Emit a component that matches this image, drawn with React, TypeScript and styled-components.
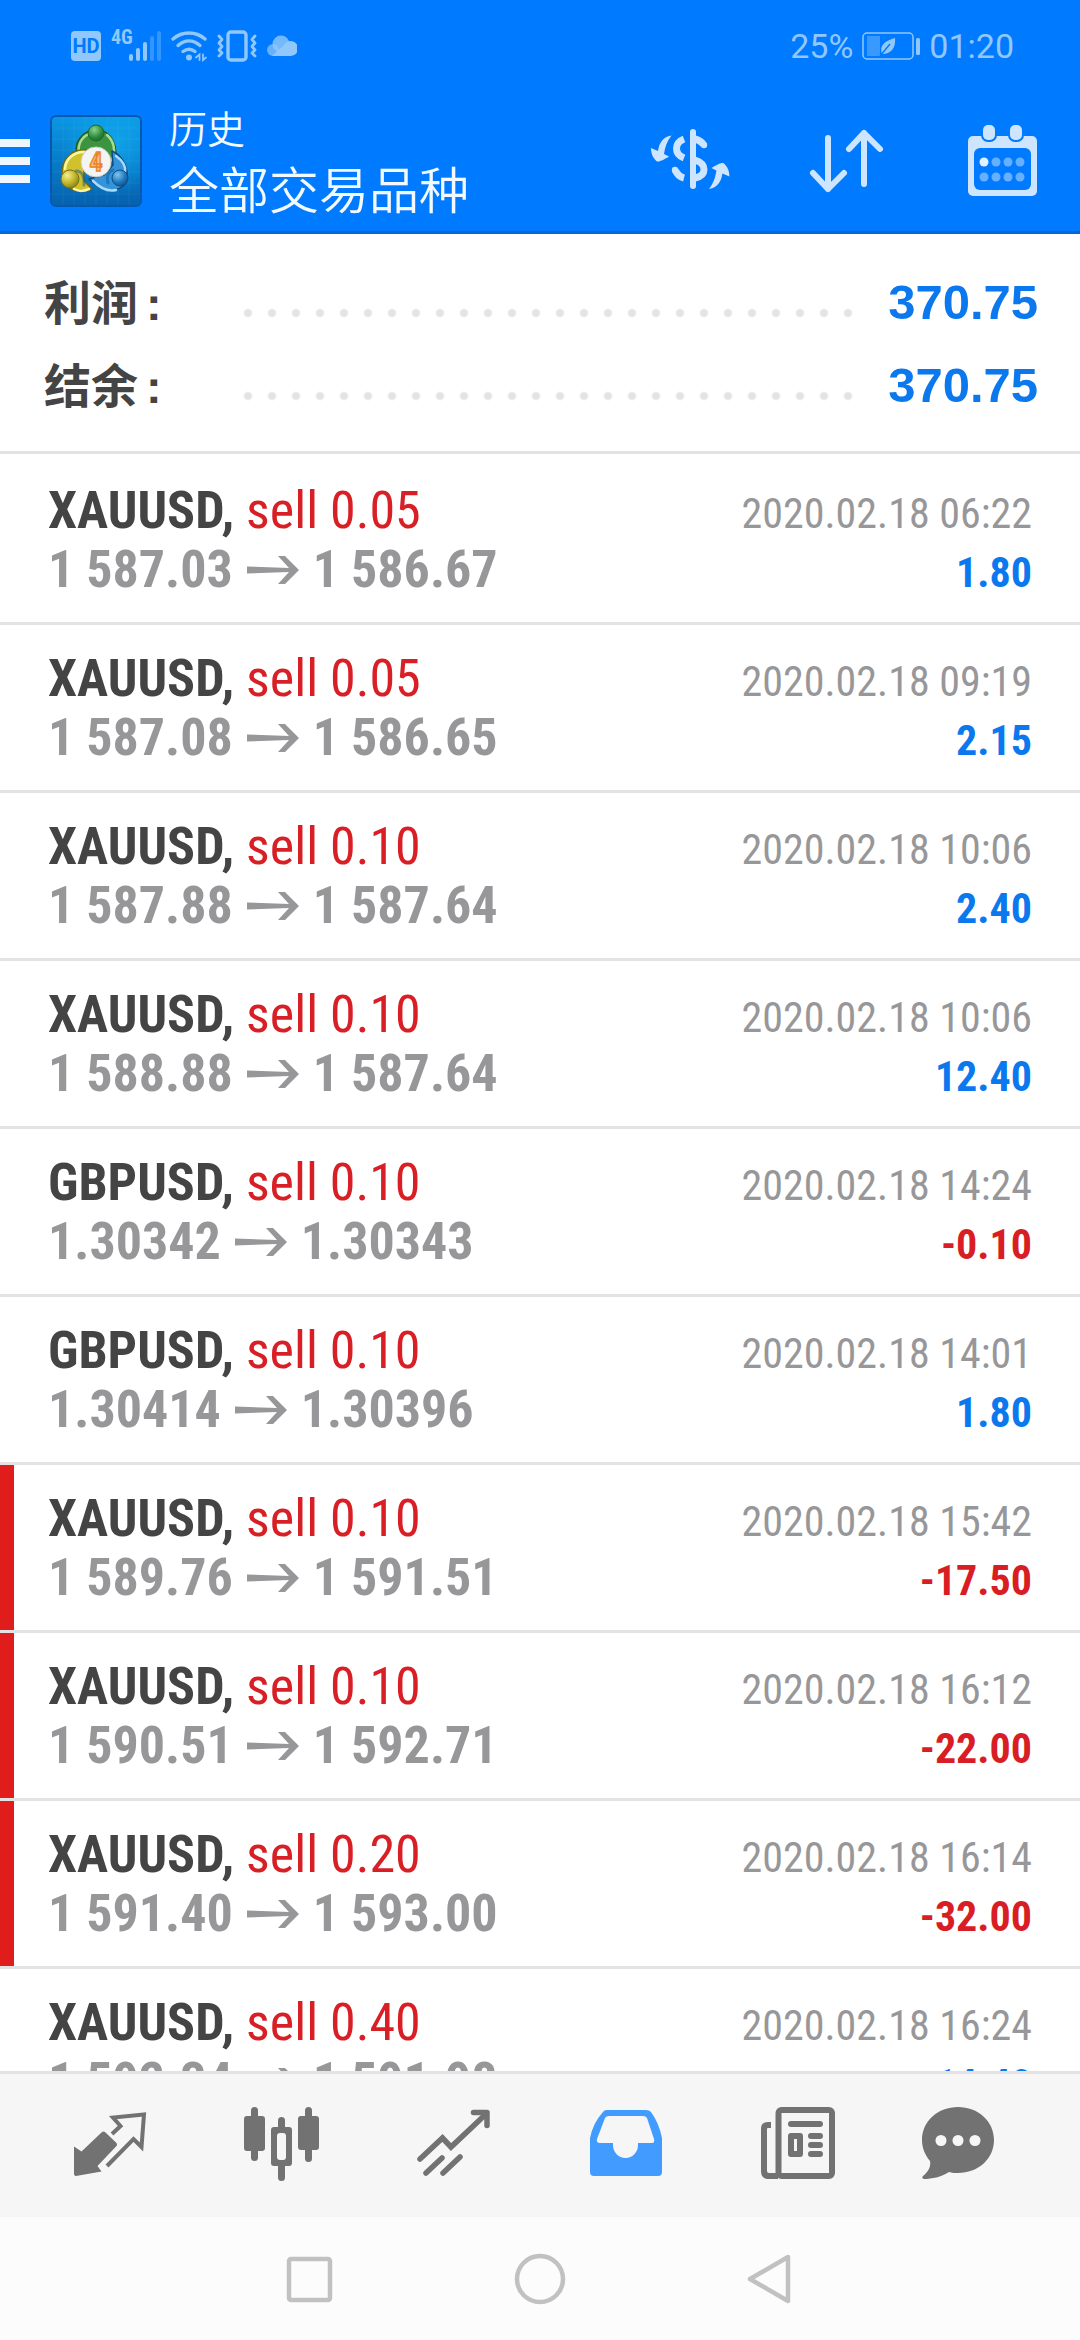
import React from "react";
import styled, { createGlobalStyle, css } from "styled-components";

const color = {
  blue: "#007aff",
  headerEdge: "#0068da",
  headerIcon: "#cde5ff",
  status: "#91c8fc",
  line: "#e3e3e3",
  ink: "#444444",
  grey: "#97979a",
  sell: "#d81f26",
  loss: "#d81e24",
  profit: "#0b78ee",
  marker: "#e11c1c",
  tab: "#727272",
  tabActive: "#429bff",
  system: "#c1c1c1",
};

const condensed = `"Roboto Condensed", Roboto, sans-serif`;
const chinese = `Roboto, "Noto Sans CJK SC", sans-serif`;

const GlobalStyle = createGlobalStyle`
  *, *::before, *::after { box-sizing: border-box; }
  body { margin: 0; background: #fff; }
  button { border: 0; padding: 0; background: none; font: inherit; color: inherit; cursor: pointer; }
  h1, h2, p, ul, dl, dt, dd { margin: 0; padding: 0; font-weight: inherit; }
  svg { display: block; flex: none; }
`;

const Screen = styled.div`
  display: flex;
  flex-direction: column;
  height: 100vh;
  background: #fff;
  font-family: ${chinese};
`;

/* ---------- header ---------- */

const Header = styled.header`
  flex: none;
  background: ${color.blue};
  border-bottom: 3px solid ${color.headerEdge};
`;

const StatusBar = styled.div`
  display: flex;
  align-items: center;
  justify-content: space-between;
  height: 91px;
  padding: 0 66px 0 71px;
  color: ${color.status};
  font: 400 34px/40px Roboto, sans-serif;
`;

const StatusGroup = styled.div<{ $gap: number }>`
  display: flex;
  align-items: center;
  gap: ${(p) => p.$gap}px;
`;

const HdBadge = styled.span`
  width: 30px;
  border-radius: 4px;
  background: ${color.status};
  color: ${color.blue};
  font: 700 20px/30px Roboto, sans-serif;
  text-align: center;
`;

const AppBar = styled.div`
  display: flex;
  align-items: center;
  height: 140px;
  padding-right: 38px;
`;

const MenuButton = styled.button`
  display: grid;
  gap: 10px;
  width: 30px;
  margin-right: 20px;
`;

const MenuLine = styled.span`
  height: 8px;
  background: #eef7ff;
`;

const Titles = styled.div`
  flex: 1;
  margin-left: 27px;
  color: #f2f9ff;
  font-family: "Noto Sans CJK SC", sans-serif;
  font-weight: 350;
`;

const Title = styled.h1`
  font-size: 38px;
  line-height: 52px;
`;

const Subtitle = styled.p`
  font-size: 50px;
  line-height: 68px;
`;

const Actions = styled.div`
  display: flex;
  gap: 76px;
  color: ${color.headerIcon};
`;

/* ---------- summary ---------- */

const Summary = styled.dl`
  flex: none;
  padding: 26px 42px 25px 44px;
  border-bottom: 3px solid ${color.line};
`;

const SummaryRow = styled.div`
  display: flex;
  align-items: center;
  height: 83px;
`;

const SummaryLabel = styled.dt`
  width: 192px;
  color: ${color.ink};
  font: 700 47px/60px "Noto Sans CJK SC", sans-serif;
`;

const Colon = styled.span`
  padding-left: 8px;
  font-family: "Liberation Sans", sans-serif;
`;

const Leader = styled.span`
  flex: 1;
  height: 24px;
  margin: 22px 28px 0 0;
  background: radial-gradient(circle, #e3e3e3 0 3px, transparent 5px) left center / 24px 24px round;
`;

const SummaryValue = styled.dd`
  color: ${color.profit};
  font: 700 49px/60px "Liberation Sans", Arial, sans-serif;
`;

/* ---------- deals ---------- */

const DealList = styled.ul`
  flex: 1;
  min-height: 0;
  padding-top: 3px;
  overflow-y: auto;
  scrollbar-width: none;
  list-style: none;
`;

const Deal = styled.li<{ $marked: boolean }>`
  padding: 24px 48px 23px;
  border-bottom: 3px solid ${color.line};
  ${(p) =>
    p.$marked &&
    css`
      box-shadow: inset 14px 0 ${color.marker};
    `}
`;

const DealLine = styled.div`
  display: flex;
  align-items: baseline;
  justify-content: space-between;
  height: 59px;
  font: 400 52px/59px ${condensed};
`;

const Symbol = styled.strong`
  color: ${color.ink};
`;

const Side = styled.span`
  color: ${color.sell};
`;

const DealDate = styled.time`
  color: ${color.grey};
  font-size: 42px;
`;

const Prices = styled.span`
  display: flex;
  align-items: center;
  gap: 14px;
  color: ${color.grey};
  font-weight: 700;
`;

const Profit = styled.strong<{ $loss: boolean }>`
  color: ${(p) => (p.$loss ? color.loss : color.profit)};
  font-size: 42px;
`;

/* ---------- bottom bars ---------- */

const TabBar = styled.nav`
  flex: none;
  display: grid;
  grid-template-columns: repeat(6, 1fr);
  justify-items: center;
  height: 146px;
  padding: 29px 24px 0;
  border-top: 3px solid ${color.line};
  background: #f6f6f6;
`;

const TabButton = styled.button<{ $active?: boolean }>`
  height: 80px;
  color: ${(p) => (p.$active ? color.tabActive : color.tab)};
`;

const SystemBar = styled.nav`
  flex: none;
  display: flex;
  align-items: center;
  justify-content: center;
  gap: 170px;
  height: 123px;
  background: #fcfcfc;
`;

/* ---------- icons ---------- */

const SignalIcon = () => (
  <svg width="50" height="44" viewBox="0 -6 50 44" fill="currentColor">
    <text x="0" y="14" fontFamily={condensed} fontSize="20" fontWeight="700">4G</text>
    <rect x="18" y="24" width="4" height="7" rx="2" />
    <rect x="25" y="18" width="4" height="13" rx="2" />
    <rect x="32" y="12" width="4" height="19" rx="2" />
    <rect x="39" y="6" width="4" height="25" rx="2" opacity=".35" />
    <rect x="46" y="1" width="4" height="30" rx="2" opacity=".35" />
  </svg>
);

const WifiIcon = () => (
  <svg width="36" height="32" viewBox="0 0 36 32" fill="none" stroke="currentColor" strokeWidth="3.4" strokeLinecap="round">
    <path d="M2 9C11 1 25 1 34 9" />
    <path d="M7 15.500C14 9.500 22 9.500 29 15.500" />
    <path d="M12 21.500C16 18.500 20 18.500 24 21.500" />
    <circle cx="18" cy="27.500" r="3" fill="currentColor" stroke="none" />
    <path d="M25 27.500L28.500 24.500V30M32 24.500V30L35 27.500" strokeWidth="1.800" />
  </svg>
);

const VibrateIcon = () => (
  <svg width="40" height="32" viewBox="0 0 40 32" fill="none" stroke="currentColor" strokeWidth="3.400" strokeLinecap="round" strokeLinejoin="round">
    <rect x="11" y="2" width="18" height="28" rx="3" />
    <path d="M2 6L5 9.500L2 13L5 16.500L2 20L5 23L2 26M38 6L35 9.500L38 13L35 16.500L38 20L35 23L38 26" strokeWidth="2.800" />
  </svg>
);

const CloudIcon = () => (
  <svg width="30" height="22" viewBox="0 0 30 22" fill="currentColor">
    <circle cx="6" cy="15" r="6" opacity=".7" />
    <circle cx="14" cy="9" r="8.500" opacity=".8" />
    <path d="M5 21L17 10A7.500 7.500 0 1 1 23 21Z" />
  </svg>
);

const BatteryIcon = () => (
  <svg width="58" height="28" viewBox="0 0 58 28" fill="currentColor">
    <rect x="1" y="1" width="50" height="26" rx="4" fill="none" stroke="currentColor" strokeWidth="1.500" />
    <rect x="5" y="4" width="13" height="20" opacity=".4" />
    <path d="M33 6C34 16 29 22 20 22C17 14 22 9 33 6Z" />
    <path d="M18 24L28 12" stroke={color.blue} strokeWidth="1.400" />
    <rect x="54" y="6" width="4" height="17" rx="1.500" />
  </svg>
);

const AppLogo = () => (
  <svg width="92" height="92" viewBox="0 0 92 92">
    <defs>
      <linearGradient id="tile" x1="0" y1="0" x2="0" y2="1">
        <stop offset="0" stopColor="#0a97e4" />
        <stop offset="1" stopColor="#0561ae" />
      </linearGradient>
      <radialGradient id="glow" cx=".7" cy=".3" r=".6">
        <stop offset="0" stopColor="#12aef2" stopOpacity=".7" />
        <stop offset="1" stopColor="#12aef2" stopOpacity="0" />
      </radialGradient>
      <radialGradient id="green" cx=".4" cy=".3" r=".8">
        <stop offset="0" stopColor="#8fd28a" />
        <stop offset=".6" stopColor="#2c8a3c" />
        <stop offset="1" stopColor="#1c6427" />
      </radialGradient>
      <radialGradient id="yellow" cx=".35" cy=".3" r=".8">
        <stop offset="0" stopColor="#f6ef8a" />
        <stop offset=".6" stopColor="#bcae22" />
        <stop offset="1" stopColor="#7d7718" />
      </radialGradient>
      <radialGradient id="azure" cx=".35" cy=".3" r=".8">
        <stop offset="0" stopColor="#7cc6f2" />
        <stop offset=".6" stopColor="#1f78bb" />
        <stop offset="1" stopColor="#0d4f88" />
      </radialGradient>
    </defs>
    <rect x="1" y="1" width="90" height="90" rx="5" fill="url(#tile)" stroke="#0759ae" strokeWidth="2" />
    <rect x="2" y="2" width="88" height="88" rx="4" fill="url(#glow)" />
    <path d="M13 2V90M24 2V90M35 2V90M46 2V90M57 2V90M68 2V90M79 2V90M2 13H90M2 24H90M2 35H90M2 46H90M2 57H90M2 68H90M2 79H90" stroke="#fff" strokeWidth=".5" opacity=".1" />
    <g strokeLinecap="round" strokeLinejoin="round">
      <path d="M28 44C22 28 32 15 47 15C61 15 70 32 64 50L52 40L38 36Z" fill="#3c9440" stroke="#1f5f23" strokeWidth="1.500" />
      <path d="M29 38C27 27 35 19 41 19M57 20C64 26 66 36 62 45" fill="none" stroke="#a9dc8e" strokeWidth="2.500" />
      <path d="M38 35C22 33 11 44 12 60C14 74 28 80 42 74L34 66L34 50Z" fill="#d2c12b" stroke="#6f6a12" strokeWidth="1.500" />
      <path d="M34 37C22 37 15 46 15 54M24 74C30 77 34 76 39 74" fill="none" stroke="#fbf6a2" strokeWidth="2.500" />
      <path d="M62 36C73 41 80 54 76 68C66 80 50 76 39 64L54 60L63 50Z" fill="#3493da" stroke="#0b4c86" strokeWidth="1.500" />
      <path d="M66 41C73 46 76 52 75 57M66 75C58 77 50 73 43 66" fill="none" stroke="#a8dcfa" strokeWidth="2.500" />
      <path d="M26 56C32 56 35 62 34 70M63 55C58 56 56 62 58 68" fill="none" stroke="#0c5c9a" strokeWidth="3" opacity=".5" />
    </g>
    <circle cx="46" cy="18" r="8" fill="url(#green)" stroke="#1f6a2b" />
    <circle cx="20" cy="64" r="9" fill="url(#yellow)" stroke="#77711a" />
    <circle cx="70" cy="63" r="8" fill="url(#azure)" stroke="#0d4f88" />
    <circle cx="46" cy="47" r="15" fill="#f4f4f2" stroke="#c9cdc4" />
    <text x="46" y="56" textAnchor="middle" fontFamily={condensed} fontSize="26" fontWeight="700" fill="#f8c48c" stroke="#e98428" strokeWidth="1.400">4</text>
  </svg>
);

const swapArrow =
  "M21.500 8.500C12 10 9 17 8 24L1 21C1 28 4 32 7 34.500C10 35 15 32 19 29.500L14 27C15 20 17 14 21.500 8.500Z";

const CurrencyIcon = () => (
  <svg width="80" height="72" viewBox="0 -2 80 72" fill="none" stroke="currentColor" strokeWidth="7">
    <path d="M43 5V59" strokeWidth="6" strokeLinecap="round" />
    <path d="M34 12C24 16 24 27 34 31" />
    <path d="M25.500 43.500C27 47 30 50 34 51" />
    <circle cx="25" cy="43" r="3.200" fill="currentColor" stroke="none" />
    <path d="M45 12C49 13 52 15 53.500 18" />
    <circle cx="54" cy="18" r="3.200" fill="currentColor" stroke="none" />
    <path d="M45 33C57 37 57 48 45 51" />
    <g fill="currentColor" stroke="none">
      <path d={swapArrow} />
      <path d={swapArrow} transform="rotate(180 40.200 35.300)" />
    </g>
  </svg>
);

const SortIcon = () => (
  <svg width="80" height="72" viewBox="0 0 80 72" fill="none" stroke="currentColor" strokeWidth="6" strokeLinecap="round" strokeLinejoin="round">
    <path d="M22 13V64M7 48L22 64L38 48" />
    <path d="M58 59V8M43 24L58 8L74 24" />
  </svg>
);

const CalendarIcon = () => (
  <svg width="80" height="72" viewBox="0 0 80 72" fill="currentColor">
    <rect x="6" y="11" width="69" height="60" rx="5" />
    <rect x="12" y="23" width="57" height="42" rx="6" fill={color.blue} />
    <rect x="19" y="-2" width="16" height="19" rx="7" fill={color.blue} />
    <rect x="46" y="-2" width="16" height="19" rx="7" fill={color.blue} />
    <rect x="21" y="0" width="12" height="15" rx="5" />
    <rect x="48" y="0" width="12" height="15" rx="5" />
    {[37, 52].map((y) =>
      [22, 34, 46, 58].map((x) => (
        <circle key={`${x}-${y}`} cx={x} cy={y} r="4.500" fill={x === 22 && y === 37 ? "#e2f1ff" : "#66b0ff"} />
      ))
    )}
  </svg>
);

const PriceArrow = () => (
  <svg width="52" height="28" viewBox="0 0 52 28" fill={color.grey} role="img" aria-label="to">
    <path d="M0 10.500L42 12L31 0H38L52 14L38 28H31L42 16L0 17.500Z" />
  </svg>
);

const QuotesIcon = () => (
  <svg width="80" height="80" viewBox="0 0 80 80">
    <path d="M4 43.500L11.500 48.500L31.500 29.500Q33.500 27.500 35.500 29.500L46 39.500Q48 41.500 46 43.500L27.500 63L31.500 68.500L6 73Q4 73 4 71Z" fill="currentColor" />
    <path d="M42 31L50.500 23L43 14.500L74 11.500L71.500 44L63.500 36L37 63" fill="none" stroke="currentColor" strokeWidth="4" />
  </svg>
);

const ChartIcon = () => (
  <svg width="80" height="80" viewBox="0 0 80 80" fill="currentColor">
    <rect x="9" y="4" width="7" height="54" rx="3.500" />
    <rect x="2" y="13" width="21" height="35" rx="3" />
    <rect x="63" y="4" width="7" height="55" rx="3.500" />
    <rect x="56" y="13" width="21" height="34" rx="3" />
    <rect x="36" y="14" width="7" height="64" rx="3.500" />
    <rect x="29" y="24" width="21" height="39" rx="3" />
    <rect x="35" y="30" width="9" height="27" rx="3" fill="#f6f6f6" />
  </svg>
);

const TradeIcon = () => (
  <svg width="80" height="80" viewBox="0 0 80 80" fill="none" stroke="currentColor" strokeWidth="5.500" strokeLinecap="round" strokeLinejoin="round">
    <path d="M6 56L28.500 35L37 44L72 11" strokeLinejoin="miter" />
    <path d="M59.500 9.500H73V22.500" />
    <path d="M12 70L28 55M29 70L46 54" />
  </svg>
);

const HistoryIcon = () => (
  <svg width="80" height="80" viewBox="0 0 80 80" fill="currentColor" fillRule="evenodd">
    <path d="M17 9Q18 7 21 7H60Q63 7 65 9Q73 20 76 35V69Q76 73 72 73H8Q4 73 4 69V35Q7 20 17 9ZM23 13Q20 13 19 15L11 36Q10 40 14 40H27V42A12.500 13 0 0 0 52 42V40H66Q69 40 68 36L61 15Q60 13 57 13Z" />
  </svg>
);

const NewsIcon = () => (
  <svg width="80" height="80" viewBox="0 0 80 80" fill="none" stroke="currentColor" strokeWidth="6">
    <rect x="20.500" y="7" width="53.500" height="66" rx="3" />
    <path d="M13 22H10Q6 22 6 26V68Q6 73 11 73H20" />
    <path d="M33 21H62" strokeLinecap="round" />
    <path d="M53 33H62M53 42H62M53 51H62" strokeLinecap="round" />
    <rect x="33" y="33" width="9" height="18" strokeLinejoin="round" />
  </svg>
);

const ChatIcon = () => (
  <svg width="104" height="80" viewBox="0 0 104 80" fill="currentColor">
    <path d="M40 4C60 4 76 18 76 37S60 70 40 70C37 70 34 70 31 69C23 74 14 76 6 76Q3 75 5 73C11 68 13 63 12 58C7 52 4 45 4 37C4 18 20 4 40 4Z" />
    <g fill="#f6f6f6">
      <circle cx="23" cy="37.500" r="5.500" />
      <circle cx="40" cy="37.500" r="5.500" />
      <circle cx="57" cy="37.500" r="5.500" />
    </g>
  </svg>
);

const SystemIcon = ({ children }: { children: React.ReactNode }) => (
  <svg width="60" height="60" viewBox="0 0 60 60" fill="none" stroke={color.system} strokeWidth="4.500" strokeLinejoin="round">
    {children}
  </svg>
);

/* ---------- data ---------- */

type DealRecord = {
  symbol: string;
  volume: string;
  open: string;
  close: string;
  date: string;
  profit: string;
  marked?: boolean;
};

const deals: DealRecord[] = [
  { symbol: "XAUUSD", volume: "0.05", open: "1 587.03", close: "1 586.67", date: "2020.02.18 06:22", profit: "1.80" },
  { symbol: "XAUUSD", volume: "0.05", open: "1 587.08", close: "1 586.65", date: "2020.02.18 09:19", profit: "2.15" },
  { symbol: "XAUUSD", volume: "0.10", open: "1 587.88", close: "1 587.64", date: "2020.02.18 10:06", profit: "2.40" },
  { symbol: "XAUUSD", volume: "0.10", open: "1 588.88", close: "1 587.64", date: "2020.02.18 10:06", profit: "12.40" },
  { symbol: "GBPUSD", volume: "0.10", open: "1.30342", close: "1.30343", date: "2020.02.18 14:24", profit: "-0.10" },
  { symbol: "GBPUSD", volume: "0.10", open: "1.30414", close: "1.30396", date: "2020.02.18 14:01", profit: "1.80" },
  { symbol: "XAUUSD", volume: "0.10", open: "1 589.76", close: "1 591.51", date: "2020.02.18 15:42", profit: "-17.50", marked: true },
  { symbol: "XAUUSD", volume: "0.10", open: "1 590.51", close: "1 592.71", date: "2020.02.18 16:12", profit: "-22.00", marked: true },
  { symbol: "XAUUSD", volume: "0.20", open: "1 591.40", close: "1 593.00", date: "2020.02.18 16:14", profit: "-32.00", marked: true },
  { symbol: "XAUUSD", volume: "0.40", open: "1 592.34", close: "1 591.98", date: "2020.02.18 16:24", profit: "14.40" },
];

const totals = [
  { label: "利润", value: "370.75" },
  { label: "结余", value: "370.75" },
];

const tabs = [
  { name: "行情", Icon: QuotesIcon },
  { name: "图表", Icon: ChartIcon },
  { name: "交易", Icon: TradeIcon },
  { name: "历史", Icon: HistoryIcon, active: true },
  { name: "新闻", Icon: NewsIcon },
  { name: "信息", Icon: ChatIcon },
];

export default function App() {
  return (
    <Screen>
      <GlobalStyle />
      <Header>
        <StatusBar>
          <StatusGroup $gap={10}>
            <HdBadge>HD</HdBadge>
            <SignalIcon />
            <WifiIcon />
            <VibrateIcon />
            <CloudIcon />
          </StatusGroup>
          <StatusGroup $gap={9}>
            <span>25%</span>
            <BatteryIcon />
            <span>01:20</span>
          </StatusGroup>
        </StatusBar>
        <AppBar>
          <MenuButton aria-label="菜单">
            <MenuLine />
            <MenuLine />
            <MenuLine />
          </MenuButton>
          <AppLogo />
          <Titles>
            <Title>历史</Title>
            <Subtitle>全部交易品种</Subtitle>
          </Titles>
          <Actions>
            <button aria-label="交易品种"><CurrencyIcon /></button>
            <button aria-label="排序"><SortIcon /></button>
            <button aria-label="日期"><CalendarIcon /></button>
          </Actions>
        </AppBar>
      </Header>

      <Summary>
        {totals.map((t) => (
          <SummaryRow key={t.label}>
            <SummaryLabel>
              {t.label}
              <Colon>:</Colon>
            </SummaryLabel>
            <Leader />
            <SummaryValue>{t.value}</SummaryValue>
          </SummaryRow>
        ))}
      </Summary>

      <DealList>
        {deals.map((d) => (
          <Deal key={d.date + d.open} $marked={!!d.marked}>
            <DealLine>
              <span>
                <Symbol>{d.symbol},</Symbol> <Side>sell {d.volume}</Side>
              </span>
              <DealDate>{d.date}</DealDate>
            </DealLine>
            <DealLine>
              <Prices>
                <span>{d.open}</span>
                <PriceArrow />
                <span>{d.close}</span>
              </Prices>
              <Profit $loss={d.profit.startsWith("-")}>{d.profit}</Profit>
            </DealLine>
          </Deal>
        ))}
      </DealList>

      <TabBar>
        {tabs.map(({ name, Icon, active }) => (
          <TabButton key={name} aria-label={name} $active={active}>
            <Icon />
          </TabButton>
        ))}
      </TabBar>

      <SystemBar>
        <button aria-label="最近任务">
          <SystemIcon><rect x="9" y="10" width="41" height="41" rx="2" /></SystemIcon>
        </button>
        <button aria-label="主屏幕">
          <SystemIcon><circle cx="30" cy="30" r="23" /></SystemIcon>
        </button>
        <button aria-label="返回">
          <SystemIcon><path d="M48 8V52L10 30Z" /></SystemIcon>
        </button>
      </SystemBar>
    </Screen>
  );
}
